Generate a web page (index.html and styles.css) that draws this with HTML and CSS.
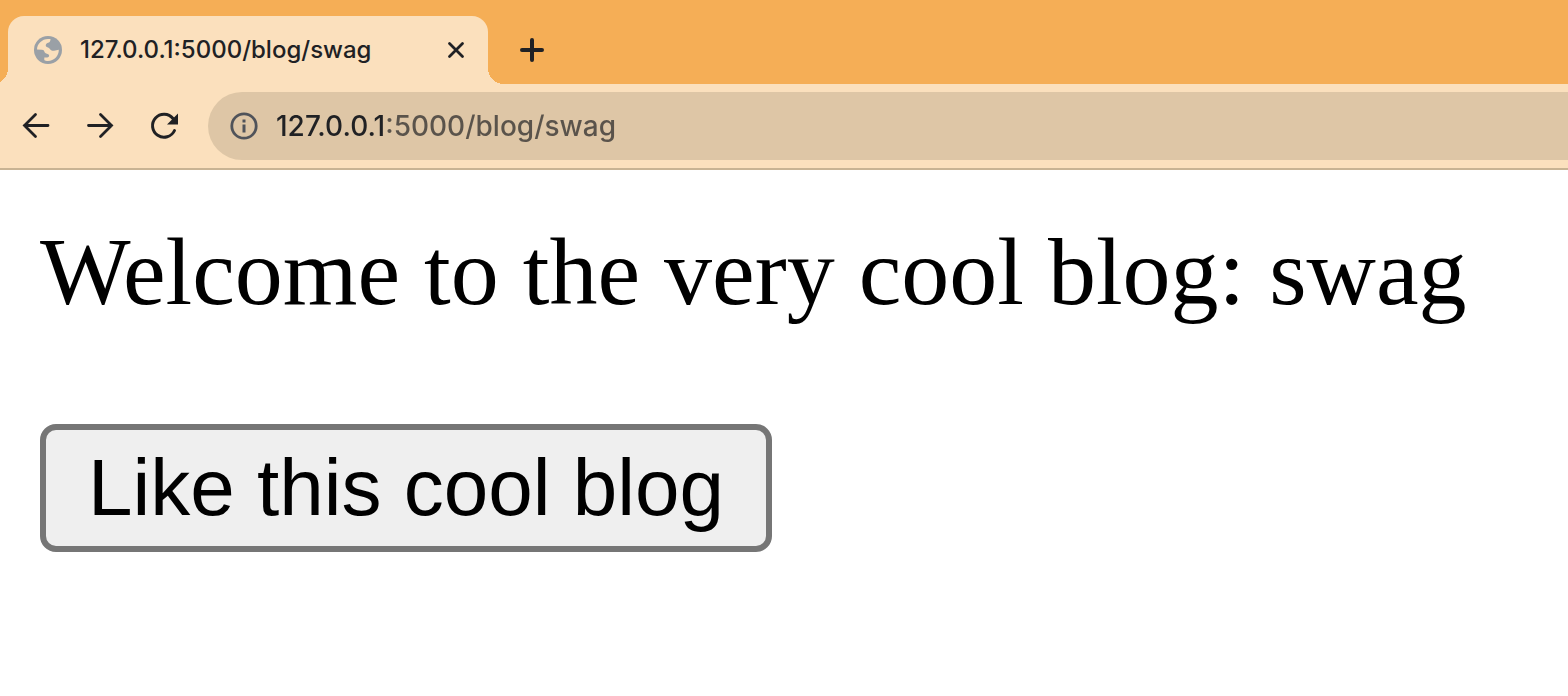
FILE: index.html
```html
<!DOCTYPE html>
<html lang="en">
<head>
<meta charset="utf-8">
<title>127.0.0.1:5000/blog/swag</title>
<link rel="stylesheet" href="styles.css">
</head>
<body>
<header class="browser">
  <div class="tab-strip">
    <div class="tab">
      <svg class="favicon" viewBox="0 0 28 28" aria-hidden="true">
        <circle cx="14" cy="14" r="14" fill="#9aa0a6"/>
        <path d="M3 13.600C3 8 8 3 14 3H16.500C16.500 5.500 15.500 6.500 14 6.800C12.500 7.300 11.500 8.500 11.800 10C12.200 11.500 14.500 11.300 15.500 12.500C16.500 14 18 15 20 14.800C22 14.600 23 14 24.800 13.800C25 20 20 25 14 25C12.500 25 11 24.700 10.300 24V21.500H13C14.500 21.500 15.500 20.500 15 19C14.500 17.500 11.500 18 10.800 16.500C10 14.500 9.500 13.800 8 13.800Z" fill="#fbe0bd"/>
      </svg>
      <span class="tab-title">127.0.0.1:5000/blog/swag</span>
      <button class="icon-button tab-close" type="button" aria-label="Close tab">
        <svg class="icon" viewBox="0 0 32 32"><path d="M9.500 9.500l13 13M22.500 9.500l-13 13" stroke-width="2.800"/></svg>
      </button>
    </div>
    <button class="icon-button new-tab" type="button" aria-label="New tab">
      <svg class="icon" viewBox="0 0 32 32"><path d="M16 6v20M6 16h20" stroke-width="4"/></svg>
    </button>
  </div>
  <div class="toolbar">
    <button class="icon-button" type="button" aria-label="Back">
      <svg class="icon" viewBox="0 0 32 32"><path d="M28 15.500H4.500M15.500 4.500L4.500 15.500L15.500 26.500" stroke-width="2.800"/></svg>
    </button>
    <button class="icon-button" type="button" aria-label="Forward">
      <svg class="icon" viewBox="0 0 32 32"><path d="M4.500 15.500h23M16.500 4.500L27.500 15.500L16.500 26.500" stroke-width="2.800"/></svg>
    </button>
    <button class="icon-button" type="button" aria-label="Reload">
      <svg class="icon" viewBox="0 0 32 32"><path d="M26.500 20.500A11.500 11.500 0 1 1 25 8.500" stroke-width="3"/><path class="solid" d="M30 3.500V14.500H19Z"/></svg>
    </button>
    <div class="address-bar">
      <svg class="info" viewBox="0 0 28 28" aria-hidden="true">
        <circle cx="14" cy="14" r="12.200" fill="none" stroke="#50535a" stroke-width="2.800"/>
        <path d="M12.500 7.500h3v3h-3zM12.500 12.500h3v8h-3z" fill="#50535a"/>
      </svg>
      <input class="address" type="text" aria-label="Address" value="127.0.0.1:5000/blog/swag">
    </div>
  </div>
</header>
<main class="page">
  <p class="welcome">Welcome to the very cool blog: swag</p>
  <button class="like" type="button">Like this cool blog</button>
</main>
</body>
</html>
```
FILE: styles.css
```css
* {
  box-sizing: border-box;
}

body {
  margin: 0;
  background: #fff;
  color: #000;
}

.browser {
  background: #fbe0bd;
  border-bottom: 2px solid #c8b393;
  font-family: Inter, "Liberation Sans", sans-serif;
  color: #202124;
}

.tab-strip {
  display: flex;
  height: 84px;
  padding: 16px 8px 0;
  background: #f5ae56;
}

.tab {
  position: relative;
  display: flex;
  align-items: center;
  width: 480px;
  padding: 0 16px 0 26px;
  border-radius: 16px 16px 0 0;
  background: #fbe0bd;
}

.tab::before,
.tab::after {
  content: "";
  position: absolute;
  bottom: 0;
  width: 16px;
  height: 16px;
}

.tab::before {
  right: 100%;
  background: radial-gradient(circle at 0 0, #f5ae56 16px, #fbe0bd 16px);
}

.tab::after {
  left: 100%;
  background: radial-gradient(circle at 100% 0, #f5ae56 16px, #fbe0bd 16px);
}

.favicon,
.info {
  flex: none;
  width: 28px;
  height: 28px;
}

.tab-title {
  flex: 1;
  margin-left: 18px;
  font-size: 24px;
  font-weight: 500;
  line-height: 32px;
  white-space: nowrap;
}

.icon-button {
  flex: none;
  width: 32px;
  height: 32px;
  padding: 0;
  border: 0;
  background: none;
}

.new-tab {
  align-self: center;
  margin-left: 28px;
}

.icon {
  display: block;
  width: 32px;
  height: 32px;
  fill: none;
  stroke: #202124;
  stroke-linecap: round;
}

.solid {
  fill: #202124;
  stroke: none;
}

.toolbar {
  display: flex;
  align-items: center;
  gap: 32px;
  padding: 8px 0 8px 20px;
}

.address-bar {
  flex: 1;
  display: flex;
  align-items: center;
  gap: 18px;
  height: 68px;
  margin-left: -4px;
  padding-left: 22px;
  border-radius: 34px 0 0 34px;
  background: #dec6a6;
}

.address {
  flex: 1;
  min-width: 0;
  padding: 0;
  border: 0;
  outline: 0;
  font: 500 28px/36px Inter, "Liberation Sans", sans-serif;
  color: #202124;
  background: linear-gradient(to right, #202124 110px, #5a534b 110px);
  background-clip: text;
  -webkit-text-fill-color: transparent;
}

.page {
  padding: 48px 40px;
}

.welcome {
  margin: 0 0 98px;
  font: 96px/108px "Liberation Serif", "Times New Roman", serif;
}

.like {
  padding: 12px 42px;
  border: 6px solid #767676;
  border-radius: 16px;
  background: #efefef;
  color: #000;
  font: 80px/92px "Liberation Sans", Arial, sans-serif;
}
```
